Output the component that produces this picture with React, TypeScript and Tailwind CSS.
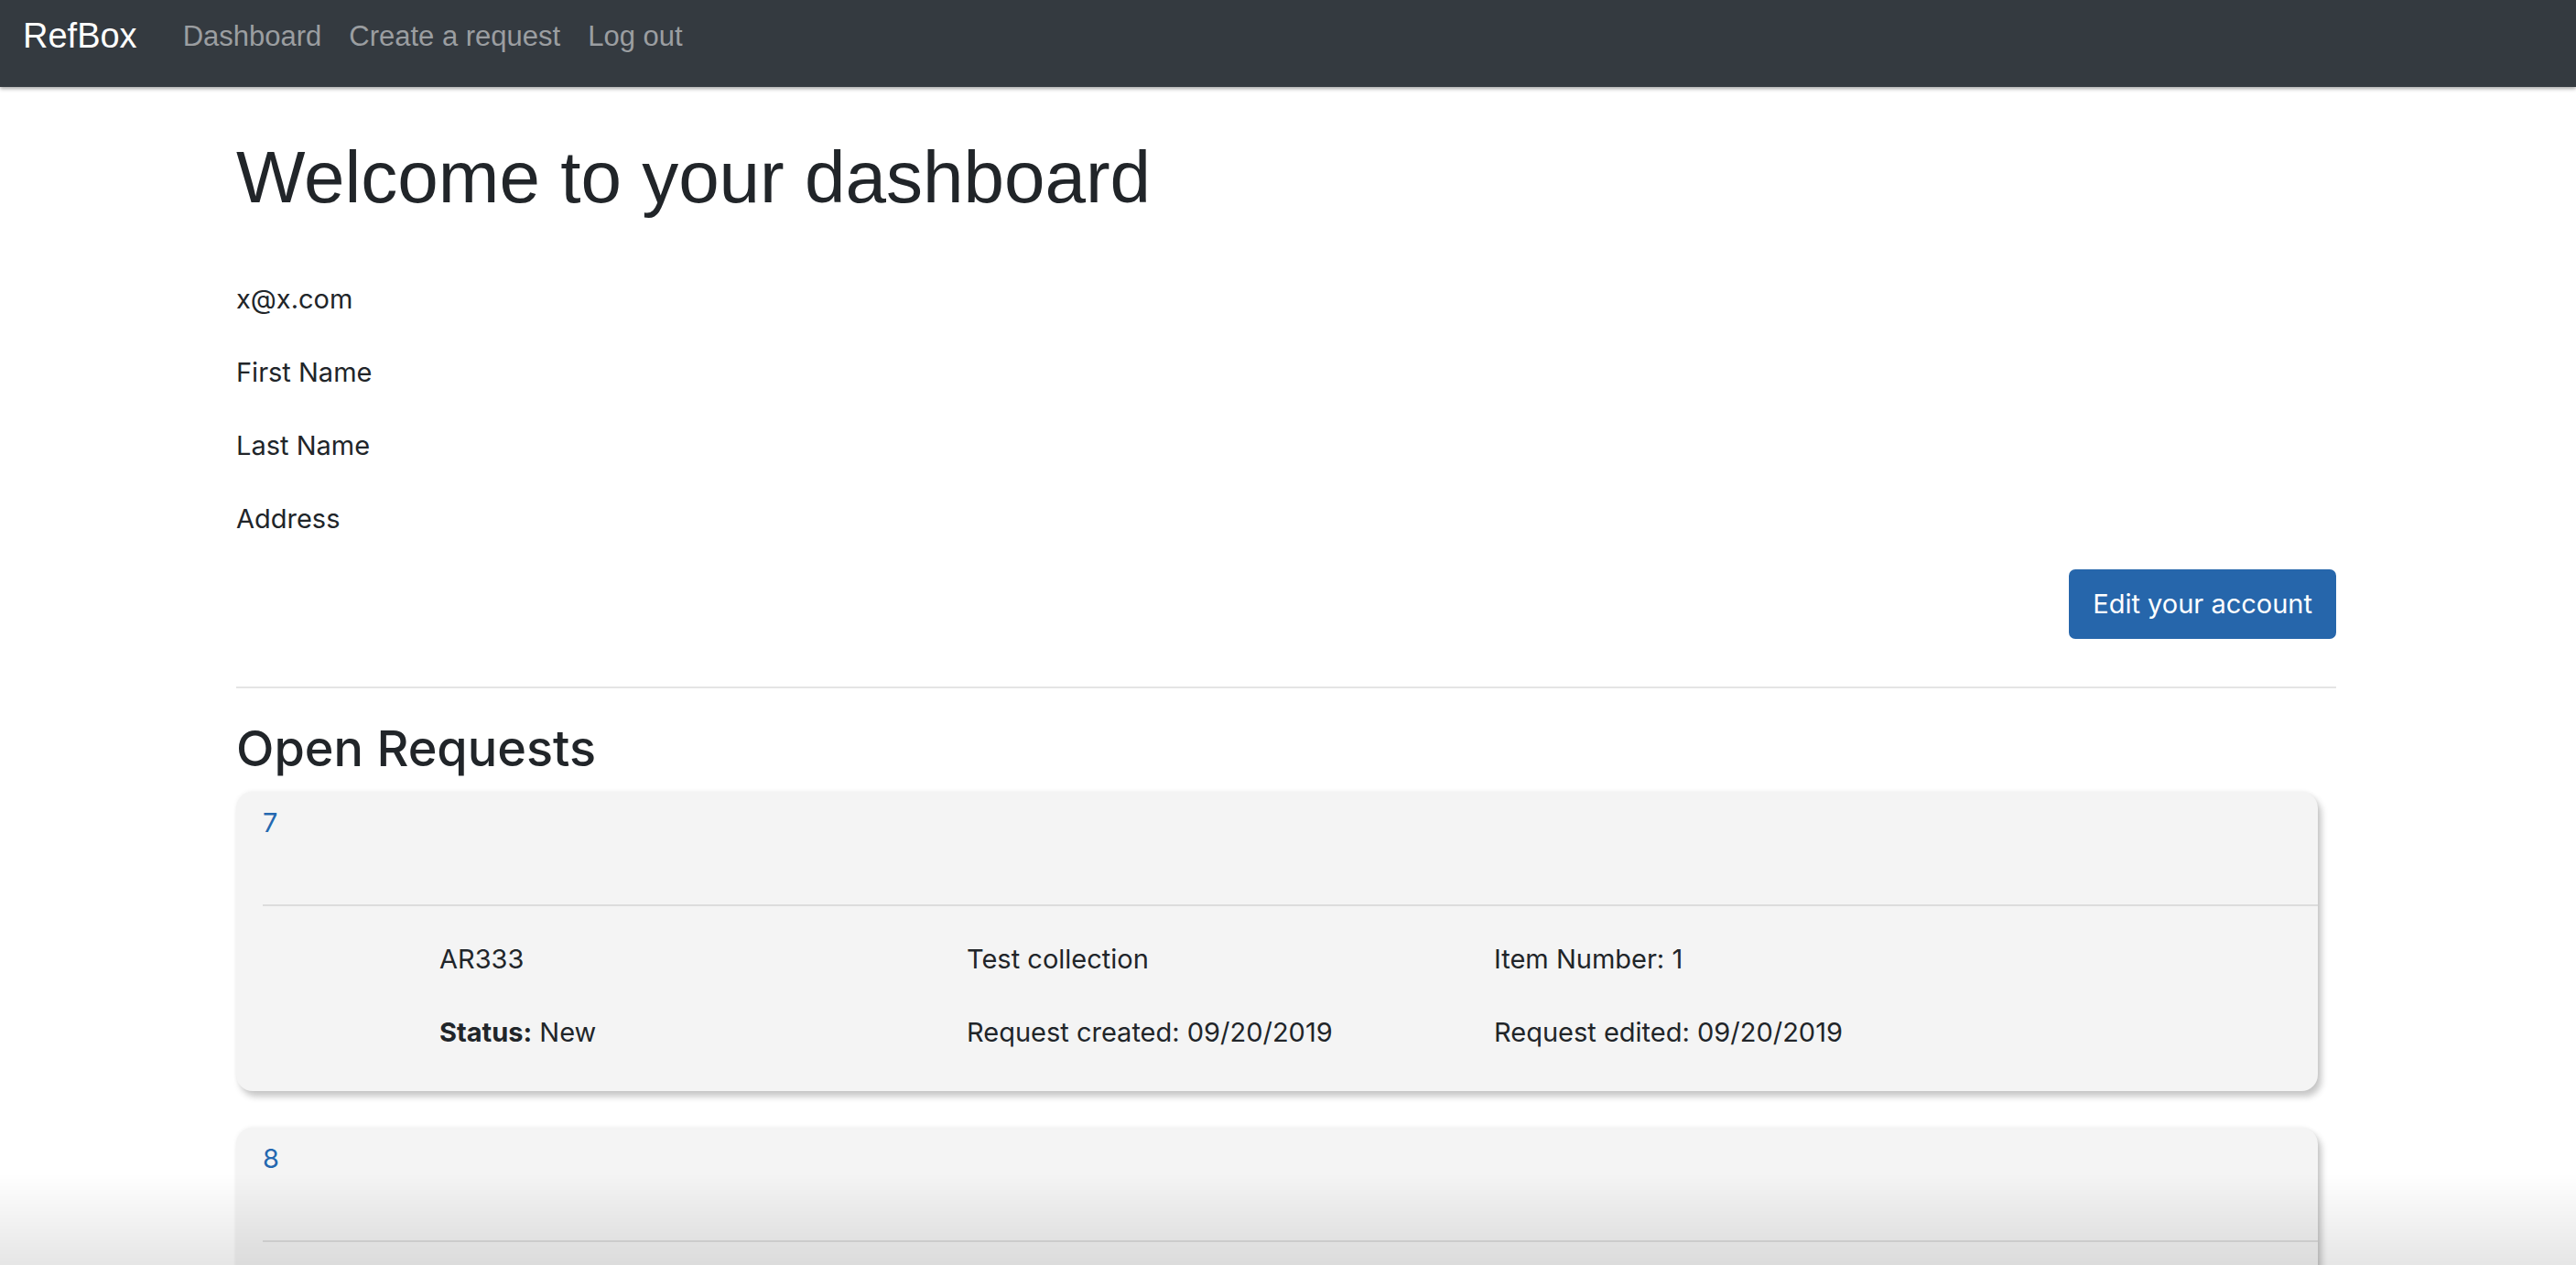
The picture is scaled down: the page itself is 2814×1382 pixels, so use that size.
import React from "react";

type Request = {
  id: number;
  code: string;
  collection: string;
  item: number;
  status: string;
  created: string;
  edited: string;
};

const REQUESTS: Request[] = [
  { id: 7, code: "AR333", collection: "Test collection", item: 1, status: "New", created: "09/20/2019", edited: "09/20/2019" },
  { id: 8, code: "AR334", collection: "Test collection", item: 2, status: "New", created: "09/20/2019", edited: "09/20/2019" },
];

const NAV_LINKS = ["Dashboard", "Create a request", "Log out"];

function Navbar() {
  return (
    <nav className="relative z-10 flex h-[95px] items-start bg-[#343a40] pl-[25px] font-['Liberation_Sans',Arial,sans-serif] shadow-[0_2px_4px_rgba(0,0,0,0.35)]">
      <a className="mt-[11px] mr-[35px] text-[38px] leading-[57px] text-white">RefBox</a>
      <ul className="mt-[17px] flex">
        {NAV_LINKS.map((label) => (
          <li key={label}>
            <a className="block px-[15px] text-[31px] leading-[46px] text-[#9b9ea1]">{label}</a>
          </li>
        ))}
      </ul>
    </nav>
  );
}

function RequestCard({ req }: { req: Request }) {
  return (
    <div className="mr-[20px] mb-[40px] rounded-[18px] bg-[#f4f4f4] shadow-[4px_6px_7px_rgba(0,0,0,0.22),0_-1px_4px_rgba(0,0,0,0.05)]">
      <div className="pt-[12px] pl-[29px]">
        <div className="border-b-2 border-[#dcdcdc] pb-[67px]">
          <a className="text-[29px] leading-[44px] text-[#2468b0]">{req.id}</a>
        </div>
      </div>
      <div className="grid grid-cols-[576px_576px_576px] gap-y-[36px] pt-[36px] pb-[42px] pl-[222px] text-[29px] leading-[44px]">
        <p>{req.code}</p>
        <p>{req.collection}</p>
        <p>Item Number: {req.item}</p>
        <p>
          <span className="font-bold">Status:</span> {req.status}
        </p>
        <p>Request created: {req.created}</p>
        <p>Request edited: {req.edited}</p>
      </div>
    </div>
  );
}

export default function App() {
  return (
    <div className="min-h-screen bg-white font-['Inter','Noto_Sans',sans-serif] text-[#212529]">
      <Navbar />
      <main className="ml-[258px] w-[2294px]">
        <h1 className="mt-[51px] font-['Liberation_Sans',Arial,sans-serif] text-[80px] leading-[96px]">
          Welcome to your dashboard
        </h1>
        <div className="mt-[63px] flex flex-col gap-[36px] text-[29px] leading-[44px]">
          <p>x@x.com</p>
          <p>First Name</p>
          <p>Last Name</p>
          <p>Address</p>
        </div>
        <div className="mt-[33px] flex justify-end">
          <button className="h-[76px] rounded-[7px] bg-[#2666ab] px-[26px] text-[29px] text-white">
            Edit your account
          </button>
        </div>
        <hr className="mt-[52px] border-t-2 border-[#e4e4e4]" />
        <h2 className="mt-[33px] text-[54px] leading-[65px] font-medium">Open Requests</h2>
        <div className="mt-[15px]">
          {REQUESTS.map((req) => (
            <RequestCard key={req.id} req={req} />
          ))}
        </div>
      </main>
      <div className="pointer-events-none fixed inset-x-0 bottom-0 h-[100px] bg-linear-to-b from-transparent to-black/10" />
    </div>
  );
}
